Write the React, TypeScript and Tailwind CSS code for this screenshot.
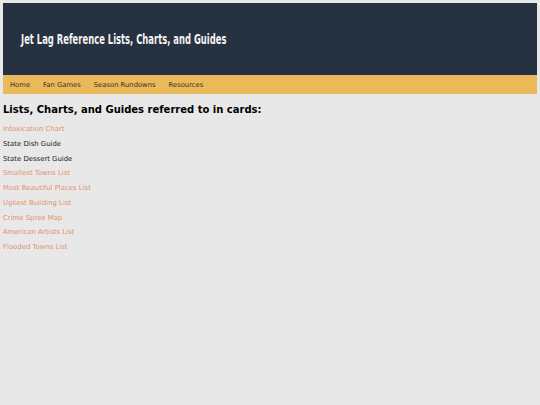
import React from 'react';

const links = [
  { label: 'Intoxication Chart', live: true },
  { label: 'State Dish Guide', live: false },
  { label: 'State Dessert Guide', live: false },
  { label: 'Smallest Towns List', live: true },
  { label: 'Most Beautiful Places List', live: true },
  { label: 'Ugliest Building List', live: true },
  { label: 'Crime Spree Map', live: true },
  { label: 'American Artists List', live: true },
  { label: 'Flooded Towns List', live: true },
];

const nav = ['Home', 'Fan Games', 'Season Rundowns', 'Resources'];

export default function App() {
  return (
    <div className="min-h-[405px] bg-[#e8e8e8] font-['DejaVu_Sans',Verdana,sans-serif] text-[#222]">
      <div className="px-[3px] pt-[3px]">
        <header className="bg-[#263141] h-[72px] flex items-center pl-[18px]">
          <h1 className="font-['DejaVu_Sans',sans-serif] font-bold text-[13.5px] text-[#f3f3f3] whitespace-nowrap origin-left [transform:scaleX(0.623)] mt-[1px]">
            Jet Lag Reference Lists, Charts, and Guides
          </h1>
        </header>
        <nav className="bg-[#e9b95a] h-[19px] flex items-center pl-[7px] pt-[2px] gap-[13px] text-[6.8px] text-[#3a3320]">
          {nav.map((n) => (
            <a key={n} className="cursor-pointer">{n}</a>
          ))}
        </nav>
      </div>
      <main className="px-[3px]">
        <h2 className="font-bold text-[10px] text-black mt-[8px] mb-[5px]">Lists, Charts, and Guides referred to in cards:</h2>
        <ul className="flex flex-col">
          {links.map((l) => (
            <li key={l.label} className={`text-[6.9px] leading-[14.75px] ${l.live ? 'text-[#e0916a]' : 'text-[#222]'}`}>
              {l.label}
            </li>
          ))}
        </ul>
      </main>
    </div>
  );
}
